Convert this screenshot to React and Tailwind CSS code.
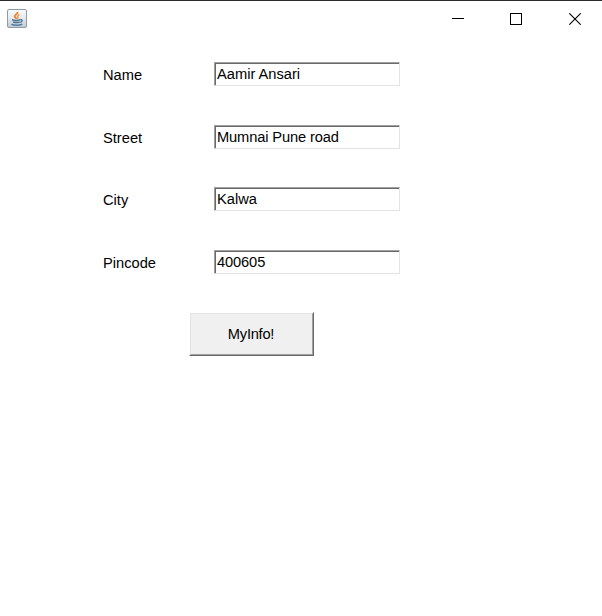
const fields = [
  { label: "Name", value: "Aamir Ansari", gap: "mb-[39px]", tracking: "tracking-normal" },
  { label: "Street", value: "Mumnai Pune road", gap: "mb-[38px]", tracking: "tracking-[-0.13px]" },
  { label: "City", value: "Kalwa", gap: "mb-[39px]", tracking: "tracking-normal" },
  { label: "Pincode", value: "400605", gap: "mb-[38px]", tracking: "tracking-[-0.12px]" },
];

function JavaIcon() {
  return (
    <svg width="20" height="20" viewBox="0 0 20 20" fill="none">
      <defs>
        <linearGradient id="tile" x1="0" y1="0" x2="0" y2="1">
          <stop offset="0" stopColor="#fbfcfd" />
          <stop offset="0.5" stopColor="#e3e9ed" />
          <stop offset="1" stopColor="#bdc9d2" />
        </linearGradient>
      </defs>
      <rect x="0.5" y="0.5" width="19" height="18" rx="1.5" fill="url(#tile)" stroke="#8b9baa" />
      <path d="M10.4 3C11 5 6.8 6 7.8 8L9.6 9.8" stroke="#e8893a" strokeWidth="2" />
      <path d="M12.4 5.6C9.4 6.8 11.8 8.2 10.2 9.8" stroke="#eda05c" strokeWidth="1.7" />
      <path d="M5 10.5H13L12.3 13.6H6.3Z" fill="#a9bccb" />
      <path d="M5 10.7C7 11.6 11 11.6 13 10.7M6.2 13.1C8.2 13.8 11 13.8 12.6 13.1M13.2 10.8C16 10.1 15.5 13 13.2 13.3" stroke="#4d7393" strokeWidth="1.3" />
      <path d="M4.4 15.2C7 16.7 12.7 16.6 15.2 15.1" stroke="#557b9b" strokeWidth="1.5" />
    </svg>
  );
}

function WindowControls() {
  return (
    <div className="mt-3 mr-[21px] flex gap-[46px]">
      <button aria-label="Minimize" className="block h-3 w-3">
        <svg width="12" height="12" shapeRendering="crispEdges">
          <rect y="5" width="12" height="1" />
        </svg>
      </button>
      <button aria-label="Maximize" className="block h-3 w-3">
        <svg width="12" height="12" fill="none" stroke="#000" shapeRendering="crispEdges">
          <rect x="0.5" y="0.5" width="11" height="11" />
        </svg>
      </button>
      <button aria-label="Close" className="ml-px block h-3 w-3">
        <svg width="12" height="12" stroke="#000" strokeWidth="1.1">
          <path d="M0.3 0.3L11.7 11.7M11.7 0.3L0.3 11.7" />
        </svg>
      </button>
    </div>
  );
}

export default function App() {
  return (
    <div className="flex h-[616px] w-[602px] flex-col overflow-hidden border-t border-[#2b2b2b] bg-white font-['Liberation_Sans',Arial,sans-serif] text-[14.67px] text-black">
      <header className="flex h-[35px] shrink-0 justify-between">
        <div className="mt-2 ml-[7px]">
          <JavaIcon />
        </div>
        <WindowControls />
      </header>
      <main className="pt-[26px]">
        {fields.map(({ label, value, gap, tracking }) => (
          <div key={label} className={`flex h-6 ${gap}`}>
            <label className="ml-[103px] w-[111px] pt-px leading-6">{label}</label>
            <div className="h-6 w-[186px] border border-t-[#a0a0a0] border-r-[#e3e3e3] border-b-[#e3e3e3] border-l-[#a0a0a0]">
              <div className={`h-full border-t border-l border-[#696969] pl-px leading-[21px] whitespace-nowrap ${tracking}`}>
                {value}
              </div>
            </div>
          </div>
        ))}
        <button className="ml-[189px] block h-11 w-[125px] border border-t-white border-r-[#696969] border-b-[#696969] border-l-white bg-[#f0f0f0]">
          <span className="flex h-full items-center justify-center border border-t-[#e3e3e3] border-r-[#a0a0a0] border-b-[#a0a0a0] border-l-[#e3e3e3] pr-px tracking-[-0.25px]">
            MyInfo!
          </span>
        </button>
      </main>
    </div>
  );
}
